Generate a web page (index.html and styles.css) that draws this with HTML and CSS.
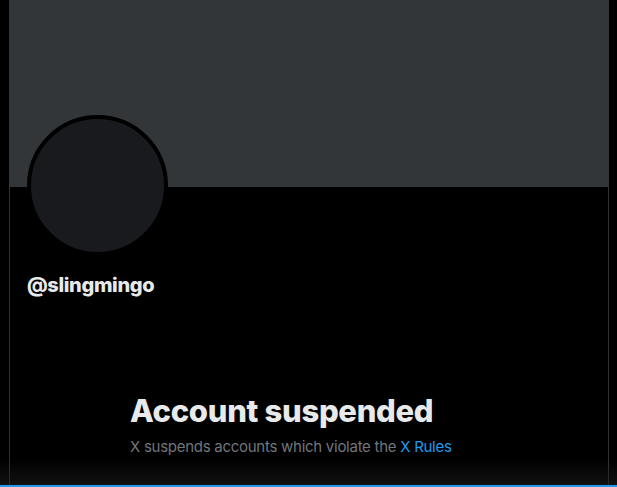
FILE: index.html
```html
<!DOCTYPE html>
<html>
<head>
<meta charset="utf-8">
<link rel="stylesheet" href="styles.css">
</head>
<body>
<main class="column">
  <div class="banner"></div>
  <div class="profile">
    <div class="avatar"></div>
    <div class="handle">@slingmingo</div>
  </div>
  <section class="empty">
    <h1 class="empty-title">Account suspended</h1>
    <p class="empty-text">X suspends accounts which violate the <a class="link" href="#">X Rules</a></p>
  </section>
</main>
<div class="bottom-fade"></div>
<div class="bottom-bar"></div>
</body>
</html>
```

FILE: styles.css
```css
* { box-sizing: border-box; }
html, body {
  margin: 0;
  padding: 0;
  background: #000;
  height: 100%;
  overflow: hidden;
}
body {
  font-family: "Inter", "Roboto", "Liberation Sans", sans-serif;
  color: #e7e9ea;
}
.column {
  margin-left: 9px;
  width: 600px;
  min-height: 100%;
  border-left: 1px solid #2f3336;
  border-right: 1px solid #2f3336;
  display: flex;
  flex-direction: column;
}
.banner {
  height: 187px;
  background: #333639;
  margin: 0 -1px;
}
.profile {
  padding-left: 17px;
  display: flex;
  flex-direction: column;
}
.avatar {
  width: 141px;
  height: 141px;
  margin-top: -72px;
  border-radius: 50%;
  background: #181a1d;
  border: 4px solid #000;
}
.handle {
  margin-top: 17px;
  font-size: 20px;
  font-weight: 800;
  line-height: 24px;
  letter-spacing: -0.35px;
}
.empty {
  margin-top: 96px;
  padding-left: 120px;
}
.empty-title {
  margin: 0;
  font-size: 31px;
  font-weight: 800;
  line-height: 36px;
  letter-spacing: -0.3px;
}
.empty-text {
  margin: 8px 0 0;
  font-size: 15px;
  line-height: 20px;
  letter-spacing: -0.27px;
  color: #71767b;
}
.link {
  color: #1d9bf0;
  text-decoration: none;
}
.bottom-fade {
  position: fixed;
  left: 0;
  right: 0;
  bottom: 2px;
  height: 26px;
  background: linear-gradient(to bottom, rgba(30,30,30,0), rgba(30,30,30,0.55));
  pointer-events: none;
}
.bottom-bar {
  position: fixed;
  left: 0;
  right: 0;
  bottom: 0;
  height: 2px;
  background: #1d9bf0;
}
```
